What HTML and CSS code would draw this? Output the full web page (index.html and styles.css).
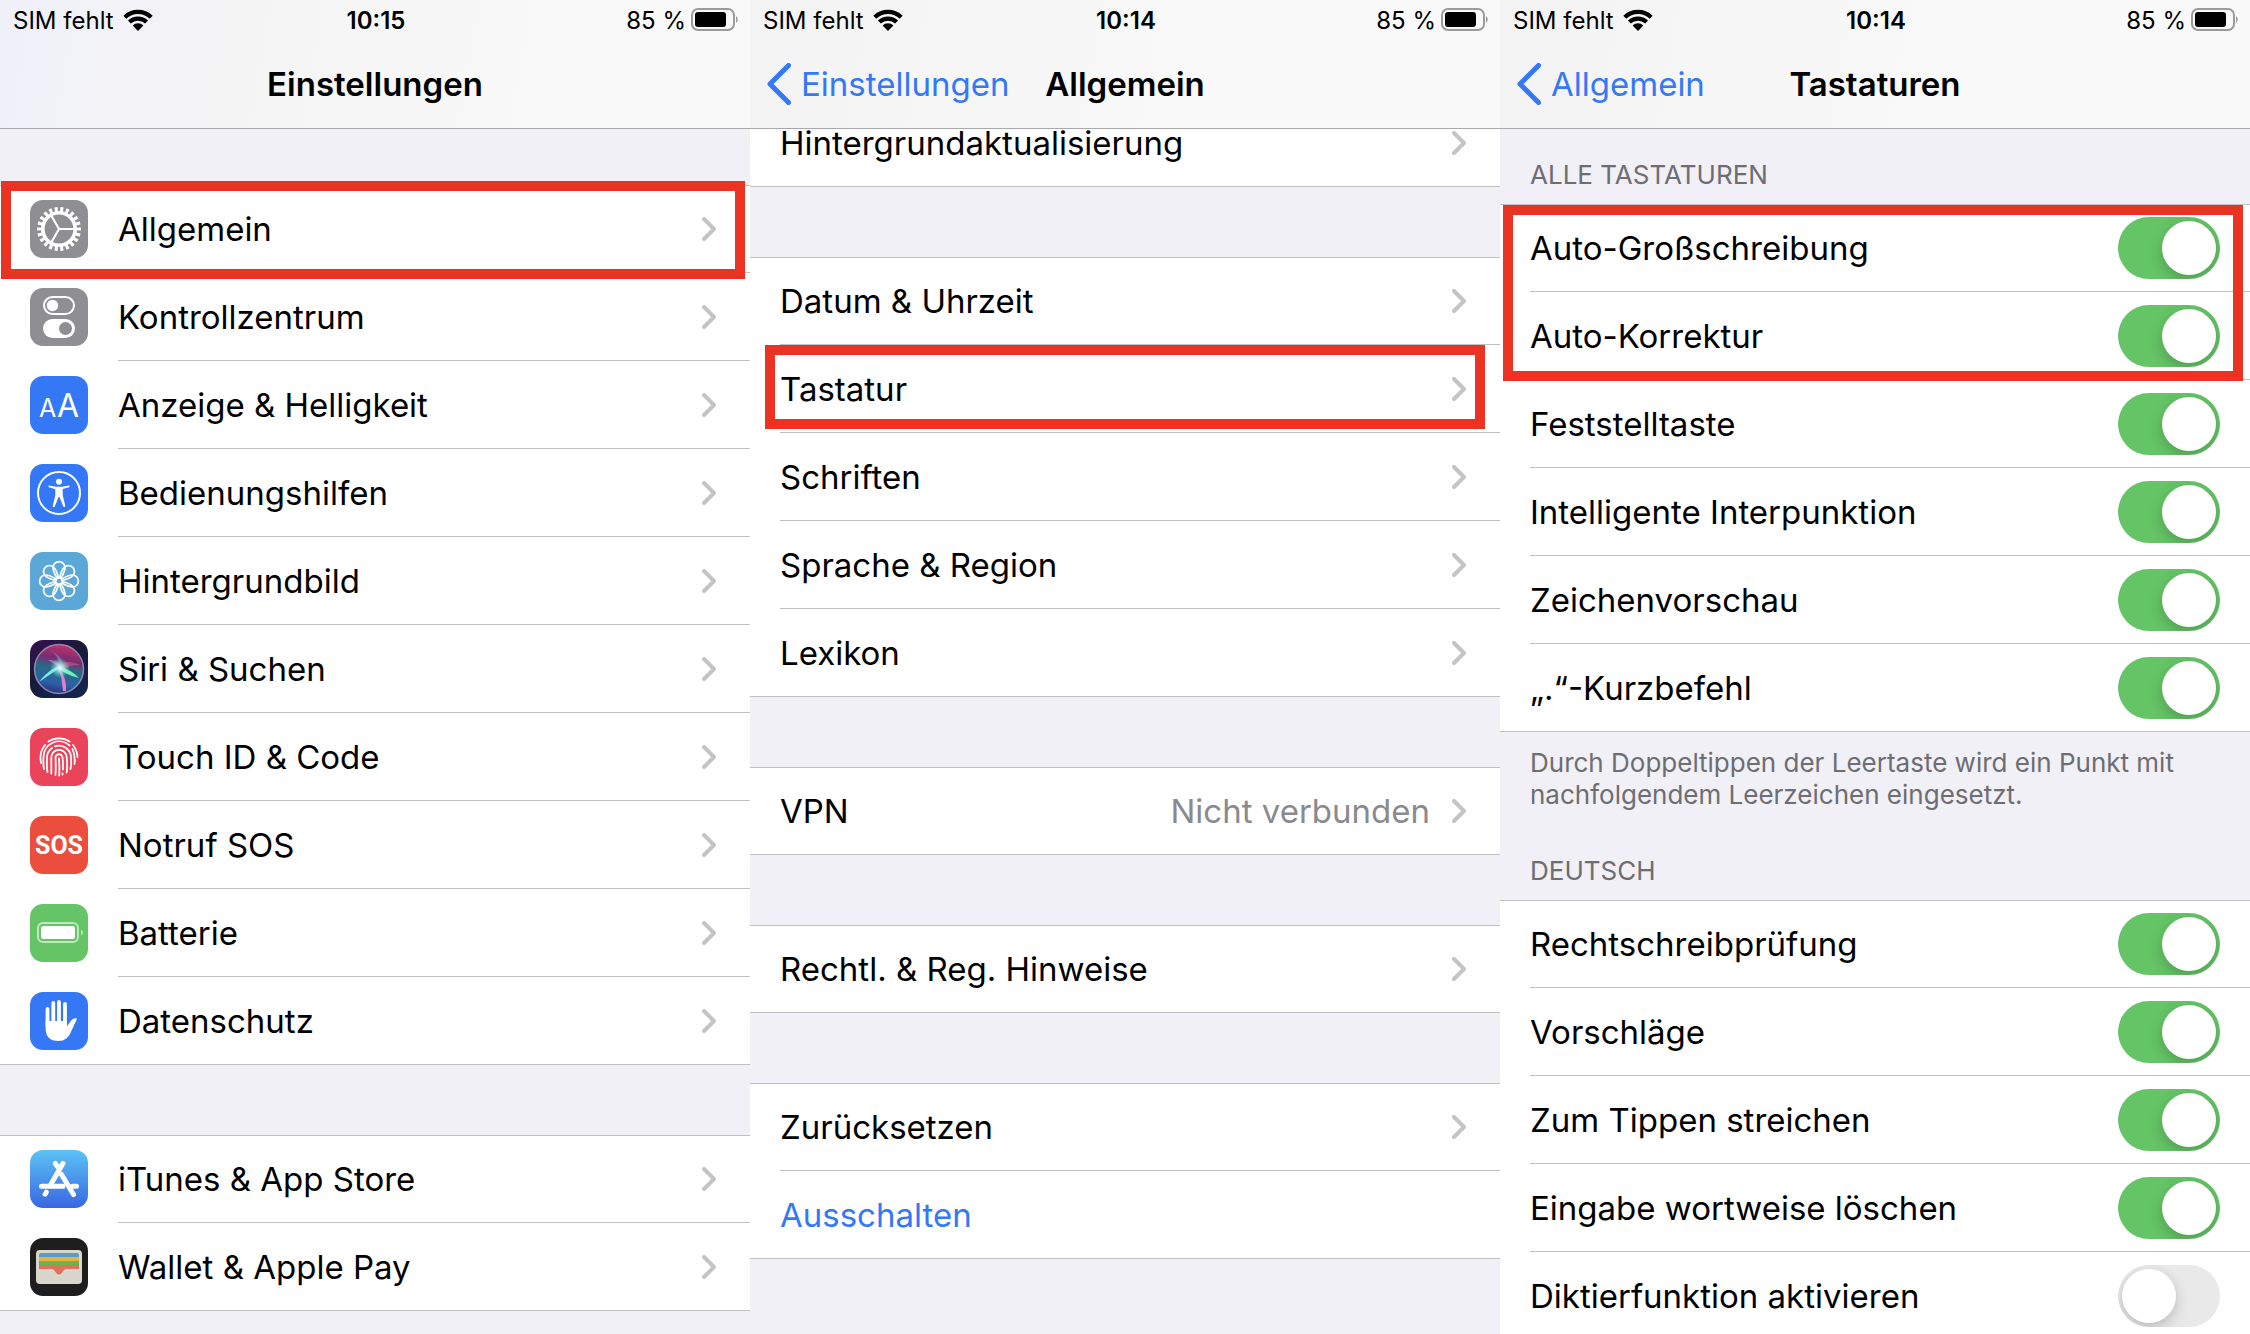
FILE: index.html
```html
<!DOCTYPE html>
<html lang="de">
<head>
  <meta charset="UTF-8" />
  <meta name="viewport" content="width=device-width, initial-scale=1.0"/>
  <title>Einstellungen - Tastatur</title>
  <link rel="stylesheet" href="styles.css">
</head>
<body>
  <!-- shared symbols -->
  <svg class="symbols" aria-hidden="true">
    <symbol id="wifi" viewBox="0 0 30 22">
      <path d="M1.8 8.2a19 19 0 0 1 26.4 0M6.4 13a12.4 12.4 0 0 1 17.2 0" fill="none" stroke="#000" stroke-width="4.2"/>
      <path d="M9.6 16.4a7.8 7.8 0 0 1 10.8 0L15 22z"/>
    </symbol>
    <symbol id="battery" viewBox="0 0 48 24">
      <rect x="1" y="1" width="42" height="21" rx="6" fill="none" stroke="#9b9b9d" stroke-width="2"/>
      <rect x="4" y="4" width="31" height="15" rx="3"/>
      <path d="M45 8a4.4 4.4 0 0 1 0 7z" fill="#9b9b9d"/>
    </symbol>
    <symbol id="chevron" viewBox="0 0 14 24">
      <path d="M2 2l10 10L2 22" fill="none" stroke="#c4c4c6" stroke-width="4" stroke-linecap="round" stroke-linejoin="round"/>
    </symbol>
    <symbol id="back" viewBox="0 0 24 42">
      <path d="M21.500 2.500L3 21l18.500 18.500" fill="none" stroke="#3478f6" stroke-width="5" stroke-linecap="round" stroke-linejoin="round"/>
    </symbol>
  </svg>

  <main class="screens">

    <section class="screen">
      <header class="topbar tinted">
        <div class="status">
          <span class="carrier">SIM fehlt <svg class="wifi"><use href="#wifi"/></svg></span>
          <span class="time">10:15</span>
          <span class="power">85 % <svg class="battery"><use href="#battery"/></svg></span>
        </div>
        <nav class="nav">
          <span></span>
          <h1>Einstellungen</h1>
          <span></span>
        </nav>
      </header>

      <div class="list first">
        <div class="group">
          <a href="#" class="row">
            <svg class="icon gray" viewBox="0 0 58 58">
              <g fill="none" stroke="#fff">
                <circle cx="29" cy="29" r="16.200" stroke-width="3.600"/>
                <circle cx="29" cy="29" r="19.500" stroke-width="5" pathLength="22" stroke-dasharray=".54 .46" stroke-dashoffset=".27"/>
                <path d="M29 29h16M29 29l-8-14M29 29l-8 14" stroke-width="2.200"/>
              </g>
            </svg>
            <span class="body">Allgemein <svg class="chevron"><use href="#chevron"/></svg></span>
            <span class="mark mark-general"></span>
          </a>
          <a href="#" class="row">
            <svg class="icon gray" viewBox="0 0 58 58">
              <rect x="14" y="9" width="30" height="17" rx="8.500" fill="none" stroke="#fff" stroke-width="2"/>
              <circle cx="22.500" cy="17.500" r="5.700" fill="#fff"/>
              <rect x="13" y="31" width="32" height="19" rx="9.500" fill="#fff"/>
              <circle cx="35.500" cy="40.500" r="6.500" fill="#8e8e93"/>
            </svg>
            <span class="body">Kontrollzentrum <svg class="chevron"><use href="#chevron"/></svg></span>
          </a>
          <a href="#" class="row">
            <svg class="icon blue" viewBox="0 0 58 58">
              <text class="glyph" x="9" y="41" font-size="25">A</text>
              <text class="glyph" x="27" y="41" font-size="32">A</text>
            </svg>
            <span class="body">Anzeige &amp; Helligkeit <svg class="chevron"><use href="#chevron"/></svg></span>
          </a>
          <a href="#" class="row">
            <svg class="icon blue" viewBox="0 0 58 58">
              <circle cx="29" cy="29" r="21" fill="none" stroke="#fff" stroke-width="2"/>
              <circle cx="29" cy="17.800" r="3" fill="#fff"/>
              <path d="M19 21.500l7 1.300h6l7-1.300q1.500.6 0 1.800l-6.300 1.700v6l2.600 11q-.8 1.500-2 .5L29.500 33h-1l-3.800 9.800q-1.200 1-2-.5l2.600-11v-6L19 23.300q-1.500-1.200 0-1.800z" fill="#fff"/>
            </svg>
            <span class="body">Bedienungshilfen <svg class="chevron"><use href="#chevron"/></svg></span>
          </a>
          <a href="#" class="row">
            <svg class="icon sky" viewBox="0 0 58 58">
              <g fill="none" stroke="#fff" stroke-width="1.700">
                <g id="petals">
                  <path id="petal" d="M27.200 26.500C24.500 22 23 18.500 23 15.600a6 6 0 0 1 12 0C35 18.500 33.500 22 30.800 26.500"/>
                  <use href="#petal" transform="rotate(90 29 29)"/>
                  <use href="#petal" transform="rotate(180 29 29)"/>
                  <use href="#petal" transform="rotate(270 29 29)"/>
                </g>
                <use href="#petals" transform="rotate(45 29 29)"/>
                <circle cx="29" cy="29" r="3.200"/>
              </g>
            </svg>
            <span class="body">Hintergrundbild <svg class="chevron"><use href="#chevron"/></svg></span>
          </a>
          <a href="#" class="row">
            <svg class="icon" viewBox="0 0 58 58">
              <defs>
                <linearGradient id="siriBg" x1="0" y1="0" x2=".6" y2="1">
                  <stop offset="0" stop-color="#38104f"/><stop offset=".5" stop-color="#171a38"/><stop offset="1" stop-color="#14244e"/>
                </linearGradient>
                <linearGradient id="siriOrb" x1=".6" y1="0" x2=".4" y2="1">
                  <stop offset="0" stop-color="#c0336f"/><stop offset=".3" stop-color="#7a2c72"/><stop offset=".5" stop-color="#276b86"/><stop offset=".8" stop-color="#2c5fa6"/><stop offset="1" stop-color="#2b2f75"/>
                </linearGradient>
                <radialGradient id="siriGlow">
                  <stop offset="0" stop-color="#fff"/><stop offset=".3" stop-color="#bff5f2" stop-opacity=".8"/><stop offset="1" stop-color="#5fd" stop-opacity="0"/>
                </radialGradient>
              </defs>
              <rect width="58" height="58" fill="url(#siriBg)"/>
              <circle cx="29" cy="29" r="24.500" fill="url(#siriOrb)" stroke="#a9a3c4" stroke-opacity=".75" stroke-width="1.500"/>
              <path d="M29 27L18 20Q27 19 31 26z" fill="#d98ad0" opacity=".6"/>
              <path d="M29 27q-1-14-9-16 12 3 14 17z" fill="#8ba5d6" opacity=".45"/>
              <path d="M29 28q6-10 21-3-10-1-20 6z" fill="#d04a84" opacity=".7"/>
              <path d="M31 27L9 42q9-12 20-16z" fill="#7fe6ee"/>
              <path d="M28 26q14 4 21 12-13-3-21-10z" fill="#70f0b8"/>
              <path d="M29 28q8 10 7 23h-3q-1-12-4-23z" fill="#e080c8"/>
              <circle cx="30" cy="28" r="10" fill="url(#siriGlow)"/>
            </svg>
            <span class="body">Siri &amp; Suchen <svg class="chevron"><use href="#chevron"/></svg></span>
          </a>
          <a href="#" class="row">
            <svg class="icon pink" viewBox="0 0 58 58">
              <g fill="none" stroke="#fff" stroke-width="1.800" stroke-linecap="round">
                <path d="M18.500 13.500a19 19 0 0 1 21 0"/>
                <path d="M11 35q-2-11 4-18M43 17q4 5 4.500 12"/>
                <path d="M14 41q-1-5-.5-12a15.500 15.500 0 0 1 26-11.500M42.500 21q3 7 2 15"/>
                <path d="M17.500 44q-1-6-.5-14a12 12 0 0 1 5-10M25 18.300A12 12 0 0 1 41 30q.5 6-.5 11"/>
                <path d="M21.300 45.500V30a7.700 7.700 0 0 1 15.400-1q.8 9 0 15.500"/>
                <path d="M25.500 47q.5-8 0-17a3.500 3.500 0 0 1 7-.5q.8 6 .4 12M32.500 45.500v1"/>
                <path d="M29 30.500q.6 9 .2 17"/>
              </g>
            </svg>
            <span class="body">Touch ID &amp; Code <svg class="chevron"><use href="#chevron"/></svg></span>
          </a>
          <a href="#" class="row">
            <svg class="icon red" viewBox="0 0 58 58">
              <text class="sos" x="29" y="38" font-size="25" text-anchor="middle">SOS</text>
            </svg>
            <span class="body">Notruf SOS <svg class="chevron"><use href="#chevron"/></svg></span>
          </a>
          <a href="#" class="row">
            <svg class="icon green" viewBox="0 0 58 58">
              <rect x="8" y="19" width="40" height="19" rx="5" fill="none" stroke="#fff" stroke-opacity=".6" stroke-width="2"/>
              <rect x="11" y="22" width="34" height="13" rx="2.500" fill="#fff"/>
              <path d="M51 25.500q4 3 0 6z" fill="#fff" opacity=".6"/>
            </svg>
            <span class="body">Batterie <svg class="chevron"><use href="#chevron"/></svg></span>
          </a>
          <a href="#" class="row">
            <svg class="icon blue" viewBox="0 0 58 58">
              <path d="M17.500 17v17M23.300 11v20M29 10v20M35 12v20" stroke="#fff" stroke-width="3.800" stroke-linecap="round"/>
              <path d="M15.600 29h21.300v5.500l4.200-6q2.500-3 6-2l-5.600 12.200Q38 49 28.500 49 15.600 49 15.600 36z" fill="#fff"/>
            </svg>
            <span class="body">Datenschutz <svg class="chevron"><use href="#chevron"/></svg></span>
          </a>
        </div>

        <div class="group">
          <a href="#" class="row">
            <svg class="icon store" viewBox="0 0 58 58">
              <g fill="none" stroke="#fff" stroke-width="5" stroke-linecap="round">
                <path d="M33 13.300L20.500 35"/>
                <path d="M16.300 42.200l-1.200 2"/>
                <path d="M25.300 13.300l2 3.200M31.500 24.500l12 20"/>
                <path d="M11.500 36.300H33M42.500 36.300h4"/>
              </g>
            </svg>
            <span class="body">iTunes &amp; App Store <svg class="chevron"><use href="#chevron"/></svg></span>
          </a>
          <a href="#" class="row">
            <svg class="icon black" viewBox="0 0 58 58">
              <rect x="6" y="12" width="46" height="34" rx="4" fill="#d9d6cc"/>
              <path d="M9 19v-2q0-2 2-2h36q2 0 2 2v2z" fill="#5b9bc6"/>
              <path d="M9 19h40v4H9z" fill="#e6b43e"/>
              <path d="M9 23h40v4H9z" fill="#6db24c"/>
              <path d="M9 27h40v4H37q-3 0-4.500 3-3.500 5.500-7 0-1.500-3-4.500-3H9z" fill="#e2705f"/>
            </svg>
            <span class="body">Wallet &amp; Apple Pay <svg class="chevron"><use href="#chevron"/></svg></span>
          </a>
        </div>
      </div>
    </section>

    <section class="screen">
      <header class="topbar">
        <div class="status">
          <span class="carrier">SIM fehlt <svg class="wifi"><use href="#wifi"/></svg></span>
          <span class="time">10:14</span>
          <span class="power">85 % <svg class="battery"><use href="#battery"/></svg></span>
        </div>
        <nav class="nav">
          <a href="#" class="back"><svg><use href="#back"/></svg>Einstellungen</a>
          <h1>Allgemein</h1>
          <span></span>
        </nav>
      </header>

      <div class="list scrolled">
        <div class="group">
          <a href="#" class="row"><span class="body">Hintergrundaktualisierung <svg class="chevron"><use href="#chevron"/></svg></span></a>
        </div>
        <div class="group">
          <a href="#" class="row"><span class="body">Datum &amp; Uhrzeit <svg class="chevron"><use href="#chevron"/></svg></span></a>
          <a href="#" class="row"><span class="body">Tastatur <svg class="chevron"><use href="#chevron"/></svg></span><span class="mark mark-keyboard"></span></a>
          <a href="#" class="row"><span class="body">Schriften <svg class="chevron"><use href="#chevron"/></svg></span></a>
          <a href="#" class="row"><span class="body">Sprache &amp; Region <svg class="chevron"><use href="#chevron"/></svg></span></a>
          <a href="#" class="row"><span class="body">Lexikon <svg class="chevron"><use href="#chevron"/></svg></span></a>
        </div>
        <div class="group">
          <a href="#" class="row"><span class="body">VPN <span class="value">Nicht verbunden</span> <svg class="chevron"><use href="#chevron"/></svg></span></a>
        </div>
        <div class="group">
          <a href="#" class="row"><span class="body">Rechtl. &amp; Reg. Hinweise <svg class="chevron"><use href="#chevron"/></svg></span></a>
        </div>
        <div class="group">
          <a href="#" class="row"><span class="body">Zurücksetzen <svg class="chevron"><use href="#chevron"/></svg></span></a>
          <button type="button" class="row action"><span class="body">Ausschalten</span></button>
        </div>
      </div>
    </section>

    <section class="screen">
      <header class="topbar">
        <div class="status">
          <span class="carrier">SIM fehlt <svg class="wifi"><use href="#wifi"/></svg></span>
          <span class="time">10:14</span>
          <span class="power">85 % <svg class="battery"><use href="#battery"/></svg></span>
        </div>
        <nav class="nav">
          <a href="#" class="back"><svg><use href="#back"/></svg>Allgemein</a>
          <h1>Tastaturen</h1>
          <span></span>
        </nav>
      </header>

      <div class="list keyboards">
        <h2>ALLE TASTATUREN</h2>
        <div class="group">
          <label class="row"><span class="body">Auto-Großschreibung <input type="checkbox" class="switch" checked></span><span class="mark mark-auto"></span></label>
          <label class="row"><span class="body">Auto-Korrektur <input type="checkbox" class="switch" checked></span></label>
          <label class="row"><span class="body">Feststelltaste <input type="checkbox" class="switch" checked></span></label>
          <label class="row"><span class="body">Intelligente Interpunktion <input type="checkbox" class="switch" checked></span></label>
          <label class="row"><span class="body">Zeichenvorschau <input type="checkbox" class="switch" checked></span></label>
          <label class="row"><span class="body">„.“-Kurzbefehl <input type="checkbox" class="switch" checked></span></label>
        </div>
        <p class="note">Durch Doppeltippen der Leertaste wird ein Punkt mit nachfolgendem Leerzeichen eingesetzt.</p>
        <h2>DEUTSCH</h2>
        <div class="group">
          <label class="row"><span class="body">Rechtschreibprüfung <input type="checkbox" class="switch" checked></span></label>
          <label class="row"><span class="body">Vorschläge <input type="checkbox" class="switch" checked></span></label>
          <label class="row"><span class="body">Zum Tippen streichen <input type="checkbox" class="switch" checked></span></label>
          <label class="row"><span class="body">Eingabe wortweise löschen <input type="checkbox" class="switch" checked></span></label>
          <label class="row"><span class="body">Diktierfunktion aktivieren <input type="checkbox" class="switch"></span></label>
        </div>
      </div>
    </section>

  </main>
</body>
</html>
```
FILE: styles.css
```css
* { box-sizing: border-box; }
body {
  margin: 0;
  background: #f0f0f6; color: #000;
  font-family: Inter, "Liberation Sans", sans-serif;
  font-size: 33px;
}
a { color: inherit; text-decoration: none; }
.symbols { display: none; }

.screens {
  display: grid;
  grid-template-columns: repeat(3, 1fr);
  height: 100vh;
  overflow: hidden;
}
.screen { min-width: 0; }

/* status bar + title */
.topbar {
  position: relative; z-index: 2;
  height: 129px;
  background: linear-gradient(100deg, #f3f3f4, #f9f9f9 60%);
  border-bottom: 1px solid #a9a9ad;
}
.topbar.tinted {
  background: linear-gradient(100deg, #f0f0fa, #f4f4f5 30%, #f9f9f9 75%);
}
.status, .nav {
  display: grid;
  grid-template-columns: 1fr auto 1fr;
  align-items: center;
}
.status {
  height: 40px;
  padding: 0 11px 0 13px;
  font-size: 24px;
}
.carrier, .power {
  display: flex; align-items: center;
  gap: 9px;
}
.power { justify-content: flex-end; gap: 5px; }
.time { font-weight: 600; }
.wifi { width: 30px; height: 22px; }
.battery { width: 48px; height: 24px; }
.nav {
  height: 88px;
  padding: 0 17px;
}
h1 {
  margin: 0;
  font-size: 33px; font-weight: 600;
}
.back {
  display: flex; align-items: center;
  gap: 10px;
  color: #3478f6;
}
.back svg { width: 24px; height: 42px; }

/* lists */
.list {
  display: flex; flex-direction: column;
  gap: 70px;
}
.first { padding-top: 56px; }
.scrolled { margin-top: -30px; }
.keyboards { gap: 0; }
.group {
  background: #fff;
  box-shadow: inset 0 1px #c0c0c3, inset 0 -1px #c0c0c3;
}
.row {
  display: flex; align-items: center;
  position: relative;
  width: 100%; height: 88px;
  padding-left: 30px;
}
.body {
  flex: 1;
  display: flex; align-items: center;
  height: 88px;
  padding-right: 34px;
  border-bottom: 1px solid #c0c0c3;
}
.row:last-child .body { border-bottom-color: transparent; }
.chevron {
  width: 14px; height: 24px;
  margin-left: auto;
}
.value {
  margin-left: auto;
  color: #8a8a8e;
}
.value + .chevron { margin-left: 22px; }
.action {
  border: none; background: none;
  font: inherit; color: #3478f6;
  padding-right: 0;
}

/* app icons */
.icon {
  width: 58px; height: 58px;
  margin-right: 30px;
  border-radius: 13px;
}
.gray { background: #8e8e93; }
.blue { background: #3478f6; }
.sky { background: #5ba7d8; }
.pink { background: #ea445a; }
.red { background: #eb4e3d; }
.green { background: #65c466; }
.black { background: #1e1e1e; }
.store { background: linear-gradient(#5bc3f5, #3867e2); }
.glyph { fill: #fff; font-family: Inter, sans-serif; }
.sos {
  fill: #fff;
  font-family: "Liberation Sans Narrow", Roboto, sans-serif;
  font-weight: bold;
}

/* keyboard settings */
h2, .note {
  margin: 0;
  padding: 0 30px;
  font-size: 26px; line-height: 32px; font-weight: 400;
  color: #6d6d72;
}
h2 { padding-top: 30px; padding-bottom: 13px; }
.note { padding-top: 15px; }
.note + h2 { padding-top: 44px; }
.keyboards .body { padding-right: 30px; }
.switch {
  appearance: none;
  width: 102px; height: 62px;
  margin: 0 0 0 auto;
  padding: 4px;
  border-radius: 31px;
  background: #e9e9ea;
  overflow: hidden;
}
.switch::before {
  content: "";
  display: block;
  width: 54px; height: 54px;
  border-radius: 50%;
  background: #fff;
  box-shadow: 0 5px 14px rgba(0, 0, 0, .2);
}
.switch:checked { background: #65c466; }
.switch:checked::before { margin-left: auto; }

/* red frames round the steps */
.mark {
  position: absolute; z-index: 1;
  border: 10px solid #ea3323;
  pointer-events: none;
}
.mark-general { top: -4px; right: 5px; bottom: -6px; left: 1px; }
.mark-keyboard { top: 0; right: 15px; bottom: 4px; left: 15px; }
.mark-auto { top: 1px; right: 7px; bottom: -89px; left: 3px; }
```
